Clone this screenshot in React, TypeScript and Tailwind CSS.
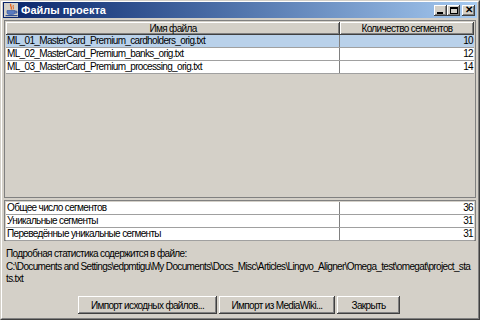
import React from "react";

const files = [
  { name: "ML_01_MasterCard_Premium_cardholders_orig.txt", count: 10 },
  { name: "ML_02_MasterCard_Premium_banks_orig.txt", count: 12 },
  { name: "ML_03_MasterCard_Premium_processing_orig.txt", count: 14 },
];

const stats = [
  { label: "Общее число сегментов", value: 36 },
  { label: "Уникальные сегменты", value: 31 },
  { label: "Переведённые уникальные сегменты", value: 31 },
];

const raised =
  "shadow-[inset_-1px_-1px_0_#404040,inset_1px_1px_0_#ffffff,inset_-2px_-2px_0_#808080]";

function CupIcon() {
  return (
    <svg width="13" height="14" viewBox="0 0 13 14">
      <path d="M6 1 C4 3 8 4 6 6.5" stroke="#e8641e" strokeWidth="1.4" fill="none" />
      <path d="M8.5 2 C7 3.5 9.5 4.5 8 6.5" stroke="#e8641e" strokeWidth="1" fill="none" />
      <path d="M2 7.5 H10 V10 C10 12 2 12 2 10 Z" fill="#5a7bc0" stroke="#2f4f96" strokeWidth="0.6" />
      <path d="M10 8.2 H11.8 V10 H10" stroke="#2f4f96" fill="none" />
      <rect x="0.5" y="12" width="12" height="1.2" fill="#2f4f96" />
    </svg>
  );
}

function WinButton({ children }: { children: React.ReactNode }) {
  return (
    <div
      className={`w-[13px] h-[11px] bg-[#d4d0c8] flex items-center justify-center ${raised}`}
    >
      {children}
    </div>
  );
}

function Button({ label, width }: { label: string; width: string }) {
  return (
    <div
      className={`${width} h-[18px] bg-[#d4d0c8] flex items-center justify-center text-black whitespace-nowrap ${raised}`}
    >
      {label}
    </div>
  );
}

export default function App() {
  return (
    <div
      className="w-[480px] h-[320px] bg-[#d4d0c8] border-t border-l border-[#d4d0c8] border-r-[#404040] border-b-[#404040] border-r border-b overflow-hidden text-[10px] tracking-[-0.65px] text-black"
      style={{ fontFamily: '"Liberation Sans", Arial, sans-serif' }}
    >
      <div className="h-full border-t border-l border-white border-r border-b border-r-[#808080] border-b-[#808080] px-[1px] flex flex-col">
        {/* Title bar */}
        <div className="h-[16px] bg-linear-to-r from-[#0a246a] to-[#a6caf0] flex items-center pl-[1px] pr-[2px]">
          <div className="w-[14px] h-[14px] bg-[#d4d0c8] flex items-center justify-center">
            <CupIcon />
          </div>
          <span className="ml-[3px] text-white font-bold text-[11px] tracking-normal leading-none">
            Файлы проекта
          </span>
          <div className="ml-auto flex items-center">
            <WinButton>
              <div className="w-[6px] h-[2px] bg-black mt-[5px] -ml-[1px]" />
            </WinButton>
            <WinButton>
              <div className="w-[8px] h-[7px] border border-black border-t-2" />
            </WinButton>
            <div className="w-[2px]" />
            <WinButton>
              <span className="text-[10px] font-bold leading-none tracking-normal">✕</span>
            </WinButton>
          </div>
        </div>

        {/* Files table */}
        <div className="mt-[2px] h-[178px] mx-[1px] border border-[#808080] bg-[#d4d0c8] p-[1px]">
          <div className="flex h-[13px]">
            <div className={`w-[334px] bg-[#d4d0c8] flex items-center justify-center ${raised}`}>
              Имя файла
            </div>
            <div className={`w-[134px] bg-[#d4d0c8] flex items-center justify-center ${raised}`}>
              Количество сегментов
            </div>
          </div>
          {files.map((f, i) => (
            <div
              key={f.name}
              className={`flex h-[13px] w-[468px] border-b border-[#a0a0a0] ${
                i === 0 ? "bg-[#b9d1ea]" : "bg-white"
              }`}
            >
              <div className="w-[334px] border-r border-[#808080] pl-[1px] leading-[12px]">
                {f.name}
              </div>
              <div className="w-[134px] text-right pr-[1px] leading-[12px]">{f.count}</div>
            </div>
          ))}
        </div>

        {/* Stats table */}
        <div className="mt-[2px] h-[41px] mx-[1px] border border-[#808080] p-[1px] pb-0">
          {stats.map((s) => (
            <div key={s.label} className="flex h-[13px] w-[468px] bg-white border-b border-[#a0a0a0]">
              <div className="w-[334px] border-r border-[#808080] pl-[1px] leading-[12px]">
                {s.label}
              </div>
              <div className="w-[134px] text-right pr-[1px] leading-[12px]">{s.value}</div>
            </div>
          ))}
        </div>

        {/* Statistics location */}
        <div className="mt-[7px] pl-[3px] leading-[12.5px] whitespace-nowrap">
          <div>Подробная статистика содержится в файле:</div>
          <div>
            C:\Documents and Settings\edpmtigu\My Documents\Docs_Misc\Articles\Lingvo_Aligner\Omega_test\omegat\project_sta
          </div>
          <div>ts.txt</div>
        </div>

        {/* Buttons */}
        <div className="mt-auto mb-[4px] flex justify-center gap-[2px] pr-[2px]">
          <Button label="Импорт исходных файлов..." width="w-[139px]" />
          <Button label="Импорт из MediaWiki..." width="w-[116px]" />
          <Button label="Закрыть" width="w-[63px]" />
        </div>
      </div>
    </div>
  );
}
